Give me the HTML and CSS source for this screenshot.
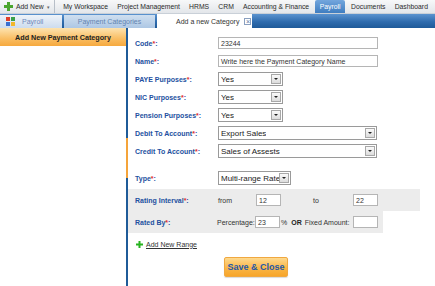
FILE: index.html
```html
<!DOCTYPE html>
<html>
<head>
<meta charset="utf-8">
<link rel="stylesheet" href="styles.css">
</head>
<body>
<div class="topbar">
  <div class="tb-item addnew">
    <svg class="plus" width="9" height="9" viewBox="0 0 9 9"><path d="M3 0h3v3h3v3H6v3H3V6H0V3h3z" fill="#4aa52e"/></svg>
    <span>Add New</span><span class="caret">▾</span>
  </div>
  <div class="tb-sep"></div>
  <div class="tb-item">My Workspace</div>
  <div class="tb-item">Project Management</div>
  <div class="tb-item">HRMS</div>
  <div class="tb-item">CRM</div>
  <div class="tb-item">Accounting &amp; Finance</div>
  <div class="tb-item active">Payroll</div>
  <div class="tb-item">Documents</div>
  <div class="tb-item">Dashboard</div>
</div>
<div class="tabbar">
  <div class="tab home">
    <svg width="10" height="10" viewBox="0 0 10 10"><rect x="0" y="0" width="4" height="4" fill="#e0402a"/><rect x="5" y="0" width="4" height="4" fill="#3aa04a"/><rect x="0" y="5" width="4" height="4" fill="#3a6fd0"/><rect x="5" y="5" width="4" height="4" fill="#f2b72a"/></svg>
    <span>Payroll</span>
  </div>
  <div class="tab cats">Payment Categories</div>
  <div class="tab current"><span>Add a new Category</span><span class="close">×</span></div>
</div>
<div class="main">
  <aside class="side">
    <div class="side-head">Add New Payment Category</div>
  </aside>
  <div class="splitter"><div class="grip"></div></div>
  <div class="content">
    <div class="row"><div class="lbl">Code<i>*</i>:</div><div class="inp w160">23244</div></div>
    <div class="row"><div class="lbl">Name<i>*</i>:</div><div class="inp w160">Write here the Payment Category Name</div></div>
    <div class="row"><div class="lbl">PAYE Purposes<i>*</i>:</div><div class="sel w65"><span>Yes</span><b class="arr"></b></div></div>
    <div class="row"><div class="lbl">NIC Purposes<i>*</i>:</div><div class="sel w65"><span>Yes</span><b class="arr"></b></div></div>
    <div class="row"><div class="lbl">Pension Purposes<i>*</i>:</div><div class="sel w65"><span>Yes</span><b class="arr"></b></div></div>
    <div class="row"><div class="lbl">Debit To Account<i>*</i>:</div><div class="sel w159"><span>Export Sales</span><b class="arr"></b></div></div>
    <div class="row"><div class="lbl">Credit To Account<i>*</i>:</div><div class="sel w159"><span>Sales of Assests</span><b class="arr"></b></div></div>
    <div class="spacer"></div>
    <div class="row"><div class="lbl">Type<i>*</i>:</div><div class="sel w73"><span>Multi-range Rate</span><b class="arr"></b></div></div>
    <div class="row band wide">
      <div class="lbl">Rating Interval<i>*</i>:</div>
      <span class="txt from">from</span><div class="inp small">12</div>
      <span class="txt to">to</span><div class="inp small">22</div>
    </div>
    <div class="row band narrow">
      <div class="lbl">Rated By<i>*</i>:</div>
      <span class="txt pct">Percentage:</span><div class="inp small">23</div>
      <span class="txt pctsign">%</span><b class="or">OR</b><span class="txt">Fixed Amount:</span><div class="inp small fixed"></div>
    </div>
    <div class="row addrange">
      <svg width="7" height="7" viewBox="0 0 7 7"><path d="M2.5 0h2v2.5H7v2H4.5V7h-2V4.5H0v-2h2.5z" fill="#27b31f"/></svg>
      <span class="link">Add New Range</span>
    </div>
    <div class="actions"><button class="btn">Save &amp; Close</button></div>
  </div>
</div>
</body>
</html>
```
FILE: styles.css
```css
* { box-sizing: border-box; }
html, body { margin: 0; padding: 0; }
body {
  width: 435px; height: 286px; overflow: hidden;
  font-family: "Liberation Sans", Arial, sans-serif;
  font-size: 7px; color: #333; background: #fff;
}
.topbar {
  height: 14px; display: flex; align-items: center;
  background: linear-gradient(#f7f8f9, #e3e6ea);
  border-bottom: 1px solid #c9d0d8;
  padding-left: 4px;
  font-size: 6.8px;
}
.tb-item { height: 13px; display: flex; align-items: center; padding: 0 4.6px; color: #2b2b2b; white-space: nowrap; }
.tb-item.addnew { padding-left: 0; padding-right: 2px; gap: 2px; }
.tb-item.addnew .plus { margin-right: 1px; }
.caret { font-size: 5px; color: #666; margin-left: 1px; }
.tb-sep { width: 1px; height: 13px; background: #b8bfc8; margin: 0 4px 0 2px; }
.tb-item.active { background: linear-gradient(#73a6dd, #3f7dc0); color: #fff; border-radius: 2px 2px 0 0; padding: 0 5px; margin: 0 1px; }
.tabbar {
  height: 14px; display: flex; align-items: flex-end; gap: 2px;
  background: linear-gradient(#5b93cf, #2f6cae 55%, #1e5a99);
}
.tab { height: 13px; display: flex; align-items: center; white-space: nowrap; }
.tab.home { width: 62px; padding-left: 6px; gap: 6px; background: linear-gradient(#eef3f9, #cddcee); color: #7088bb; }
.tab.cats { width: 91px; justify-content: center; background: linear-gradient(#cfdff0, #adc7e4); color: #6183b0; }
.tab.current { width: 95px; height: 14px; padding-left: 19px; background: #fff; color: #333; }
.close { margin-left: 5px; width: 7px; height: 7px; border: 1px solid #8aa0c0; font-size: 7px; line-height: 5px; text-align: center; color: #5a74a0; }
.main { display: flex; height: 258px; }
.side { width: 126px; background: #fff; }
.side-head {
  height: 18px; display: flex; align-items: center; justify-content: center;
  background: linear-gradient(#fde3b0, #f9bd62 60%, #f6a93e);
  font-weight: bold; color: #222; font-size: 7.2px;
}
.splitter { width: 2px; background: #1f5b98; position: relative; }
.grip { position: absolute; left: 0; top: 110px; width: 2px; height: 40px; background: #f5a43a; }
.content { flex: 1; padding-top: 6px; }
.row { display: flex; align-items: center; height: 18px; }
.lbl { width: 90px; padding-left: 7px; font-weight: bold; color: #2350a0; white-space: nowrap; flex: none; }
.lbl i { font-style: normal; color: #e03030; }
.inp { height: 12px; border: 1px solid #b5b5b5; background: #fff; padding-left: 2px; display: flex; align-items: center; color: #333; white-space: nowrap; flex: none; }
.w160 { width: 160px; }
.sel { height: 14px; border: 1px solid #9a9a9a; background: #fff; display: flex; align-items: center; justify-content: space-between; padding-left: 2px; font-size: 8px; color: #222; }
.sel span { white-space: nowrap; overflow: hidden; }
.w65 { width: 65px; }
.w159 { width: 159px; }
.w73 { width: 73px; }
.arr { flex: none; width: 10px; height: 10px; margin-right: 1px; border: 1px solid #a8a8a8; background: linear-gradient(#fafafa, #dcdcdc); position: relative; }
.arr::after { content: ""; position: absolute; left: 2px; top: 3px; border-left: 2px solid transparent; border-right: 2px solid transparent; border-top: 2px solid #222; }
.spacer { height: 9px; }
.band { height: 22px; background: #ececec; }
.band.wide { margin-top: 2px; width: 292px; }
.band.narrow { width: 255px; }
.txt { white-space: nowrap; color: #333; flex: none; }
.from { width: 38px; }
.to { width: 72px; padding-left: 32px; }
.pct { width: 38px; margin-left: -1px; }
.inp.small { width: 25px; }
.pctsign { margin-left: 1px; }
.or { margin: 0 3px 0 4px; font-weight: bold; color: #222; }
.fixed { margin-left: 4px; width: 24px; }
.addrange { height: 18px; margin-top: 2px; padding-left: 8px; gap: 3px; }
.link { text-decoration: underline; color: #333; }
.actions { padding-left: 96px; padding-top: 4px; }
.btn {
  width: 64px; height: 20px; border: 1px solid #f0a840; border-radius: 2px;
  background: linear-gradient(#fed98e, #f9b444 60%, #f7a52a);
  font-family: "Liberation Sans", Arial, sans-serif; font-weight: bold; font-size: 9px; color: #2458aa;
  padding: 0; box-shadow: 0 1px 1px rgba(0,0,0,0.15);
}
```
